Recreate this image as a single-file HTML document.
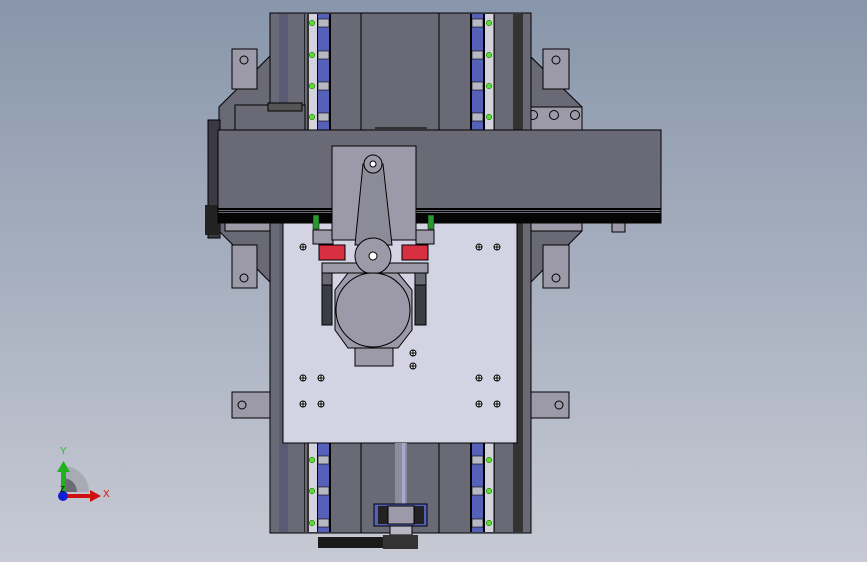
<!DOCTYPE html>
<html><head><meta charset="utf-8"><style>
html,body{margin:0;padding:0;width:867px;height:562px;overflow:hidden}
svg{display:block}
</style></head><body>
<svg width="867" height="562" viewBox="0 0 867 562" xmlns="http://www.w3.org/2000/svg">
<defs>
<linearGradient id="bg" x1="0" y1="0" x2="0" y2="1">
<stop offset="0" stop-color="#8896ab"/><stop offset="1" stop-color="#c7cad4"/>
</linearGradient>
<g id="bolt"><circle r="3" fill="#fff" stroke="#000" stroke-width="1"/><path d="M-3 0H3M0 -3V3" stroke="#000" stroke-width="1"/></g>
</defs>
<rect width="867" height="562" fill="url(#bg)"/>
<g stroke="#000" stroke-width="1">
<path d="M219 107 L270 56 L270 130 L219 130Z" fill="#6a6a76"/>
<path d="M582 107 L530 56 L530 130 L582 130Z" fill="#6a6a76"/>
<rect x="232" y="49" width="25" height="40" fill="#9c9aa8"/>
<rect x="543" y="49" width="26" height="40" fill="#9c9aa8"/>
<circle cx="244" cy="60" r="4" fill="none"/><circle cx="556" cy="60" r="4" fill="none"/>
<rect x="525" y="107" width="57" height="23" fill="#9c9aa8"/>
<circle cx="533" cy="115" r="4.5" fill="none"/><circle cx="554" cy="115" r="4.5" fill="none"/><circle cx="575" cy="115" r="4.5" fill="none"/>
<path d="M219 231 L270 282 L270 223 L219 223Z" fill="#6a6a76"/>
<path d="M582 231 L530 283 L530 223 L582 223Z" fill="#6a6a76"/>
<rect x="232" y="245" width="25" height="43" fill="#9c9aa8"/>
<rect x="543" y="245" width="26" height="43" fill="#9c9aa8"/>
<circle cx="244" cy="278" r="4" fill="none"/><circle cx="556" cy="278" r="4" fill="none"/>
<rect x="225" y="223" width="51" height="8" fill="#9c9aa8"/>
<rect x="525" y="223" width="57" height="8" fill="#9c9aa8"/>
<rect x="612" y="223" width="13" height="9" fill="#9c9aa8"/>
<rect x="232" y="392" width="38" height="26" fill="#9c9aa8"/>
<rect x="530" y="392" width="39" height="26" fill="#9c9aa8"/>
<circle cx="242" cy="405" r="4" fill="none"/><circle cx="559" cy="405" r="4" fill="none"/>
<rect x="270" y="13" width="261" height="520" fill="#6a6a76"/>
</g>
<rect x="279" y="14" width="9" height="518" fill="#5a5a72"/>
<rect x="513" y="14" width="10" height="518" fill="#333"/>
<line x1="361" y1="13" x2="361" y2="533" stroke="#000"/>
<line x1="439" y1="13" x2="439" y2="533" stroke="#000"/>
<g>
<rect x="304" y="14" width="1" height="518" fill="#222"/>
<rect x="307" y="14" width="2" height="518" fill="#333"/>
<rect x="309" y="14" width="8" height="518" fill="#d3d3de"/>
<rect x="317" y="14" width="1.5" height="518" fill="#000"/>
<rect x="318" y="14" width="11" height="518" fill="#5560b8"/>
<rect x="329" y="14" width="2" height="518" fill="#000"/>
<rect x="470" y="14" width="2" height="518" fill="#000"/>
<rect x="472" y="14" width="11" height="518" fill="#5560b8"/>
<rect x="483" y="14" width="2" height="518" fill="#000"/>
<rect x="485" y="14" width="8" height="518" fill="#d3d3de"/>
<rect x="494" y="14" width="1" height="518" fill="#222"/>
</g>
<g fill="#58e030" stroke="#205010" stroke-width="0.5">
<circle cx="312" cy="23" r="2.8"/><circle cx="312" cy="55" r="2.8"/><circle cx="312" cy="86" r="2.8"/><circle cx="312" cy="117" r="2.8"/>
<circle cx="312" cy="460" r="2.8"/><circle cx="312" cy="491" r="2.8"/><circle cx="312" cy="523" r="2.8"/>
<circle cx="489" cy="23" r="2.8"/><circle cx="489" cy="55" r="2.8"/><circle cx="489" cy="86" r="2.8"/><circle cx="489" cy="117" r="2.8"/>
<circle cx="489" cy="460" r="2.8"/><circle cx="489" cy="491" r="2.8"/><circle cx="489" cy="523" r="2.8"/>
</g>
<g fill="#b8b8c4" stroke="#000" stroke-width="0.6">
<rect x="318" y="19" width="11" height="8"/><rect x="318" y="51" width="11" height="8"/><rect x="318" y="82" width="11" height="8"/><rect x="318" y="113" width="11" height="8"/>
<rect x="318" y="456" width="11" height="8"/><rect x="318" y="487" width="11" height="8"/><rect x="318" y="519" width="11" height="8"/>
<rect x="472" y="19" width="11" height="8"/><rect x="472" y="51" width="11" height="8"/><rect x="472" y="82" width="11" height="8"/><rect x="472" y="113" width="11" height="8"/>
<rect x="472" y="456" width="11" height="8"/><rect x="472" y="487" width="11" height="8"/><rect x="472" y="519" width="11" height="8"/>
</g>
<rect x="283" y="223" width="234" height="220" fill="#d3d3e3" stroke="#000"/>
<rect x="395" y="443" width="12" height="62" fill="#8c8c9c"/>
<rect x="402" y="443" width="3" height="62" fill="#a8a8d0"/>
<rect x="374" y="504" width="53" height="22" fill="#5560b8" stroke="#000"/>
<rect x="378" y="506" width="10" height="18" fill="#222"/><rect x="414" y="506" width="10" height="18" fill="#222"/>
<rect x="388" y="506" width="26" height="18" fill="#9c9aa8" stroke="#000"/>
<rect x="390" y="526" width="22" height="9" fill="#b8b8c4" stroke="#000"/>
<rect x="318" y="537" width="100" height="11" fill="#1a1a1a"/>
<rect x="383" y="535" width="35" height="14" fill="#333"/>
<rect x="235" y="105" width="70" height="26" fill="#6a6a76" stroke="#000"/>
<rect x="268" y="103" width="34" height="8" fill="#555" stroke="#000"/>
<rect x="208" y="120" width="12" height="118" fill="#3a3a44" stroke="#000"/>
<rect x="205" y="205" width="15" height="30" fill="#222"/>
<rect x="218" y="130" width="443" height="93" fill="#6a6a76" stroke="#000"/>
<rect x="218" y="208" width="443" height="2" fill="#000"/>
<rect x="218" y="211" width="443" height="1" fill="#000"/>
<rect x="218" y="213" width="443" height="10" fill="#050505"/>
<rect x="375" y="127" width="52" height="3" fill="#333"/>
<rect x="313" y="215" width="6" height="14" fill="#2a9a30" stroke="#000" stroke-width="0.5"/>
<rect x="428" y="215" width="6" height="14" fill="#2a9a30" stroke="#000" stroke-width="0.5"/>
<use href="#bolt" x="303" y="247"/><use href="#bolt" x="479" y="247"/><use href="#bolt" x="497" y="247"/>
<use href="#bolt" x="303" y="378"/><use href="#bolt" x="321" y="378"/><use href="#bolt" x="479" y="378"/><use href="#bolt" x="497" y="378"/>
<use href="#bolt" x="303" y="404"/><use href="#bolt" x="321" y="404"/><use href="#bolt" x="479" y="404"/><use href="#bolt" x="497" y="404"/>
<use href="#bolt" x="413" y="353"/><use href="#bolt" x="413" y="366"/>
<g stroke="#000" stroke-width="1">
<rect x="313" y="230" width="20" height="14" fill="#9c9aa8"/>
<rect x="416" y="230" width="18" height="14" fill="#9c9aa8"/>
<rect x="319" y="245" width="26" height="15" fill="#d83040"/>
<rect x="402" y="245" width="26" height="15" fill="#d83040"/>
<rect x="322" y="263" width="106" height="10" fill="#9c9aa8"/>
<rect x="322" y="273" width="10" height="52" fill="#3c3c44"/>
<rect x="415" y="273" width="11" height="52" fill="#3c3c44"/>
<rect x="322" y="273" width="10" height="12" fill="#6a6a76"/>
<rect x="415" y="273" width="11" height="12" fill="#6a6a76"/>
<rect x="332" y="146" width="84" height="94" fill="#9c9aa8"/>
<path d="M363 164 L383 164 L392 245 L355 245Z" fill="#8c8c98"/>
<circle cx="373" cy="164" r="9" fill="#9c9aa8"/>
<circle cx="373" cy="164" r="3" fill="#fff"/>
<circle cx="373" cy="256" r="18" fill="#9c9aa8"/>
<circle cx="373" cy="256" r="4" fill="#fff"/>
<path d="M348 273 L398 273 L412 290 L412 330 L398 348 L348 348 L335 330 L335 290Z" fill="#9c9aa8"/>
<circle cx="373" cy="310" r="37" fill="#9c9aa8"/>
<rect x="355" y="348" width="38" height="18" fill="#9c9aa8"/>
</g>
<path d="M63 466 A26 26 0 0 1 89 492 L63 492Z" fill="#a8abb4"/>
<path d="M63 478 A14 14 0 0 1 77 492 L63 492Z" fill="#6a6c74"/>
<rect x="61" y="470" width="5" height="22" fill="#20b020"/>
<path d="M57 472 L63.5 461 L70 472Z" fill="#20b020"/>
<rect x="63" y="494" width="28" height="4" fill="#d01010"/>
<path d="M90 490 L101 496 L90 502Z" fill="#d01010"/>
<circle cx="63" cy="496" r="5" fill="#1020d0"/>
<text x="60" y="454" font-family="Liberation Sans, sans-serif" font-size="10" fill="#20c020">Y</text>
<text x="103" y="497" font-family="Liberation Sans, sans-serif" font-size="10" fill="#e01010">X</text>
<text x="60" y="492" font-family="Liberation Sans, sans-serif" font-size="8" fill="#000">Z</text>
</svg>
</body></html>
